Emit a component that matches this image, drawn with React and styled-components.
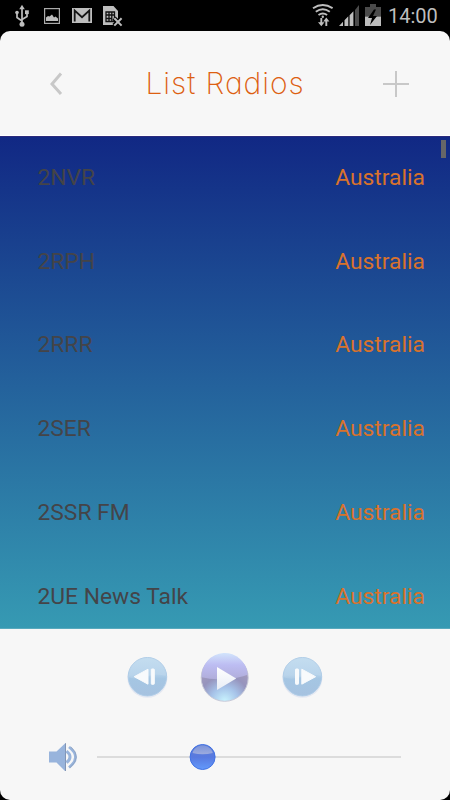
import React from "react";
import styled, { createGlobalStyle } from "styled-components";

const GlobalStyle = createGlobalStyle`
  * { box-sizing: border-box; }
  body { margin: 0; background: #000; }
`;

const Screen = styled.div`
  width: 450px;
  height: 800px;
  display: flex;
  flex-direction: column;
  overflow: hidden;
  background: #000;
  font-family: Roboto, "Liberation Sans", sans-serif;
`;

const StatusBar = styled.div`
  height: 31px;
  flex: none;
  display: flex;
  justify-content: space-between;
  padding: 0 12px 0 15px;
`;

const StatusGroup = styled.div`
  display: flex;
  gap: ${(p) => p.$gap}px;
`;

const Icon = styled.svg`
  display: block;
  flex: none;
  width: ${(p) => p.$w}px;
  height: ${(p) => p.$h}px;
`;

const Clock = styled.span`
  width: 50px;
  margin-left: 1px;
  font-size: 20px;
  line-height: 32px;
  color: #bebebe;
  white-space: nowrap;
`;

const AppWindow = styled.main`
  flex: 1;
  display: flex;
  flex-direction: column;
  overflow: hidden;
  border-radius: 10px;
  background: #f7f7f7;
`;

const Header = styled.header`
  height: 105px;
  flex: none;
  display: flex;
  align-items: center;
  justify-content: space-between;
  padding: 1px 41px 0 50px;
  border-bottom: 1px solid #fff;
`;

const Title = styled.h1`
  margin: 0 0 2px;
  width: 155px;
  font-family: Inter, Lato, sans-serif;
  font-size: 30px;
  line-height: 40px;
  font-weight: 230;
  letter-spacing: 0.95px;
  font-feature-settings: "cv11" 1;
  color: #dd5f12;
  white-space: nowrap;
`;

const IconButton = styled.button`
  display: flex;
  padding: 0;
  border: 0;
  background: none;
`;

const StationList = styled.ul`
  position: relative;
  height: 493px;
  flex: none;
  margin: 0;
  padding: 0;
  overflow: hidden;
  list-style: none;
  background: linear-gradient(#112884, #369ab3);
  border-top: 1px solid #2b2a7c;
  border-bottom: 1px solid #58a9bd;
`;

const Station = styled.li`
  height: 83.75px;
  display: flex;
  align-items: center;
  justify-content: space-between;
  padding: 0 25px 2px 37.5px;
  font-size: 22.8px;
  line-height: 28px;
`;

const Name = styled.span`
  color: #444448;
`;

const Country = styled.span`
  color: #d9722c;
`;

const ScrollThumb = styled.div`
  position: absolute;
  top: 3px;
  right: 4px;
  width: 5px;
  height: 18px;
  background: #666668;
`;

const Player = styled.footer`
  flex: 1;
  display: flex;
  flex-direction: column;
`;

const Controls = styled.div`
  height: 96px;
  display: flex;
  align-items: center;
  gap: 31px;
  padding-left: 126px;
`;

const VolumeRow = styled.div`
  height: 64px;
  display: flex;
  align-items: center;
  padding-left: 48px;
  gap: 19px;
`;

const Track = styled.div`
  position: relative;
  width: 304px;
  height: 2px;
  background: #dcdcdc;
`;

const Knob = styled(Icon)`
  position: absolute;
  left: 92px;
  top: -13px;
`;

const stations = ["2NVR", "2RPH", "2RRR", "2SER", "2SSR FM", "2UE News Talk"];

function Usb() {
  return (
    <Icon $w={14} $h={31} viewBox="15 0 14 31">
      <g fill="none" stroke="#bebebe" strokeWidth="1.7">
        <path d="M22 8v15M17 14v3.5l5 3.5M27 13v3.5l-5 3" />
      </g>
      <path d="M22 4.8l2.8 4.4h-5.6z" fill="#bebebe" />
      <circle cx="22" cy="24.2" r="2.5" fill="#bebebe" />
      <circle cx="17" cy="12.6" r="1.8" fill="#bebebe" />
      <rect x="25" y="10.3" width="3.8" height="3.8" fill="#bebebe" />
    </Icon>
  );
}

function Picture() {
  return (
    <Icon $w={16} $h={31} viewBox="44 0 16 31">
      <rect x="44.6" y="8.6" width="14.8" height="14.8" fill="none" stroke="#aaa" strokeWidth="1.2" />
      <path d="M46 21v-3.5l2-1.5 1.5.5 2.5-2 2 3 1.5-1 2.5 2V21z" fill="#bebebe" />
    </Icon>
  );
}

function Mail() {
  return (
    <Icon $w={20} $h={31} viewBox="72 0 20 31">
      <rect x="72" y="8" width="20" height="15" fill="#bebebe" />
      <path d="M74.7 21.5V10.5l7.3 6.7 7.3-6.7v11" fill="none" stroke="#151515" strokeWidth="1.8" />
    </Icon>
  );
}

function Sim() {
  return (
    <Icon $w={20} $h={31} viewBox="103 0 20 31">
      <path d="M103 6h10.5l4.5 5v14h-15z" fill="#bebebe" />
      <path d="M106 12h8.5v9.5H106zM109 12v9.5M111.8 12v9.5M106 15h8.5M106 18.5h6" fill="none" stroke="#111" strokeWidth="1.3" />
      <path d="M114 18.2l7.5 7.5M121.5 18.2l-7.5 7.5" stroke="#000" strokeWidth="4.5" />
      <path d="M114.3 18.3l7.3 7.3M121.6 18.3l-7.3 7.3" stroke="#bebebe" strokeWidth="2" />
    </Icon>
  );
}

function Wifi() {
  return (
    <Icon $w={21} $h={31} viewBox="312 0 21 31">
      <g fill="none" stroke="#bebebe" strokeWidth="1.9">
        <path d="M313 8.2q9.8-6.5 19.6 0M315.8 11.8q7-5 14 0M318.5 15q4.3-3 8.6 0" />
        <path d="M321.3 18v6M326.3 26v-6" />
      </g>
      <circle cx="322.8" cy="16.8" r="1.2" fill="#bebebe" />
      <path d="M318 22.3h6.5l-3.2 4zM323.2 21.5h6.2l-3.1-4z" fill="#bebebe" />
    </Icon>
  );
}

function Signal() {
  return (
    <Icon $w={20} $h={31} viewBox="338 0 20 31">
      <path d="M338 26l4-4.2V26zM343.5 20.3l3.8-4V26h-3.8zM348.6 15.3l3.8-4V26h-3.8z" fill="#bebebe" />
      <path d="M354 10l4-5v21h-4z" fill="#4b4b4b" />
    </Icon>
  );
}

function Battery() {
  return (
    <Icon $w={16} $h={31} viewBox="365 0 16 31">
      <path d="M370 4h6v3h5v9.5h-16V7h5z" fill="#4b4b4b" />
      <path d="M365 16.5h16V26h-16z" fill="#bebebe" />
      <path d="M374 9.5l-6 8.5h4l-2 7 7-9h-4l3-6.5z" fill="#000" />
    </Icon>
  );
}

function SkipButton({ forward }) {
  const id = forward ? "next" : "prev";
  return (
    <IconButton aria-label={forward ? "Next station" : "Previous station"}>
      <Icon $w={43} $h={44} viewBox="0 0 43 44">
        <defs>
          <linearGradient id={id} x2="0" y2="1">
            <stop offset="0" stopColor="#bdd9ef" />
            <stop offset=".45" stopColor="#b2d0e9" />
            <stop offset=".55" stopColor="#a5c6e3" />
            <stop offset="1" stopColor="#a6c2e0" />
          </linearGradient>
        </defs>
        <circle cx="21.4" cy="22.8" r="20" fill="#e4e8f2" />
        <circle cx="21.4" cy="21.7" r="19.2" fill={`url(#${id})`} stroke="#aecce7" />
        <path d="M2.5 22Q3 3 21.4 2.5 40 3 40.3 21 30 18 23 21 10 26 2.5 22z" fill="#fff" opacity=".1" />
        <g transform={forward ? "matrix(-1 0 0 1 42.8 0)" : undefined} fill="#f8fafc" stroke="#f8fafc" strokeLinejoin="round">
          <path d="M8.2 21.7L22 14.2v15z" />
          <rect x="25.3" y="14" width="3" height="15.3" rx=".6" />
        </g>
      </Icon>
    </IconButton>
  );
}

function PlayButton() {
  return (
    <IconButton aria-label="Play">
      <Icon $w={50} $h={50} viewBox="0 0 50 50">
        <defs>
          <linearGradient id="playTop" x2="0" y2="1">
            <stop offset="0" stopColor="#d2e4fc" />
            <stop offset=".45" stopColor="#bdbdf2" />
            <stop offset="1" stopColor="#b0adda" />
          </linearGradient>
          <radialGradient id="playBase" cx=".5" cy="1" r=".75">
            <stop offset="0" stopColor="#c9f4ff" />
            <stop offset=".4" stopColor="#a6c2e8" />
            <stop offset=".72" stopColor="#9694bd" />
            <stop offset="1" stopColor="#a39bbd" />
          </radialGradient>
          <linearGradient id="playArrow" x2="0" y2="1">
            <stop offset="0" stopColor="#fff" />
            <stop offset="1" stopColor="#e8edf5" />
          </linearGradient>
        </defs>
        <circle cx="24.7" cy="25.8" r="23.5" fill="url(#playBase)" stroke="#c7c9d8" />
        <path d="M1.7 25.3A23 23 0 0 1 47.7 22.8Q39 26 26 27 12 28 1.7 25.3z" fill="url(#playTop)" />
        <path d="M17 15.1L36.2 26.5 17 38z" fill="url(#playArrow)" />
      </Icon>
    </IconButton>
  );
}

function Speaker() {
  return (
    <Icon $w={30} $h={30} viewBox="48 742 30 30">
      <path d="M49 751.5h7.5l8.5-8V771l-8.5-8.5H49z" fill="#98b4dc" />
      <path d="M65.5 743.2V771" stroke="#8295b5" strokeWidth="1" />
      <g fill="none" stroke="#98b4dc">
        <path d="M66.5 751.2q7 5.7 0 11.5" strokeWidth="3" />
        <path d="M69 747q13 10 0 20.5" strokeWidth="2.8" />
      </g>
      <path d="M71 746.8q11 10.2-1 21" fill="none" stroke="#8c9db9" strokeWidth=".7" />
    </Icon>
  );
}

function VolumeKnob() {
  return (
    <Knob $w={28} $h={28} viewBox="0 0 28 28">
      <defs>
        <linearGradient id="knob" x2="0" y2="1">
          <stop offset="0" stopColor="#6280d5" />
          <stop offset=".5" stopColor="#5879df" />
          <stop offset="1" stopColor="#6399fb" />
        </linearGradient>
        <linearGradient id="gloss" x2="0" y2="1">
          <stop offset="0" stopColor="#7f97dc" />
          <stop offset="1" stopColor="#a4b0de" />
        </linearGradient>
      </defs>
      <circle cx="13.6" cy="14" r="12.5" fill="url(#knob)" stroke="#3f70e4" />
      <path d="M3.5 10C6 0 21 0 23.8 10Q13.5 12.5 3.5 10z" fill="url(#gloss)" opacity=".9" />
    </Knob>
  );
}

export default function App() {
  return (
    <>
      <GlobalStyle />
      <Screen>
        <StatusBar>
          <StatusGroup $gap={15}>
            <Usb />
            <StatusGroup $gap={11.5}>
              <Picture />
              <Mail />
              <Sim />
            </StatusGroup>
          </StatusGroup>
          <StatusGroup $gap={6}>
            <Wifi />
            <Signal />
            <Battery />
            <Clock>14:00</Clock>
          </StatusGroup>
        </StatusBar>
        <AppWindow>
          <Header>
            <IconButton aria-label="Back">
              <Icon $w={13} $h={24} viewBox="0 0 13 24">
                <path d="M11 1.5L2 12l9 10" fill="none" stroke="#c8c8c8" strokeWidth="3" />
              </Icon>
            </IconButton>
            <Title>List Radios</Title>
            <IconButton aria-label="Add station">
              <Icon $w={26} $h={26} viewBox="0 0 26 26">
                <path d="M13 0v26M0 13h26" stroke="#c8c8c8" strokeWidth="2" />
              </Icon>
            </IconButton>
          </Header>
          <StationList>
            {stations.map((name) => (
              <Station key={name}>
                <Name>{name}</Name>
                <Country>Australia</Country>
              </Station>
            ))}
            <ScrollThumb />
          </StationList>
          <Player>
            <Controls>
              <SkipButton />
              <PlayButton />
              <SkipButton forward />
            </Controls>
            <VolumeRow>
              <Speaker />
              <Track>
                <VolumeKnob />
              </Track>
            </VolumeRow>
          </Player>
        </AppWindow>
      </Screen>
    </>
  );
}
